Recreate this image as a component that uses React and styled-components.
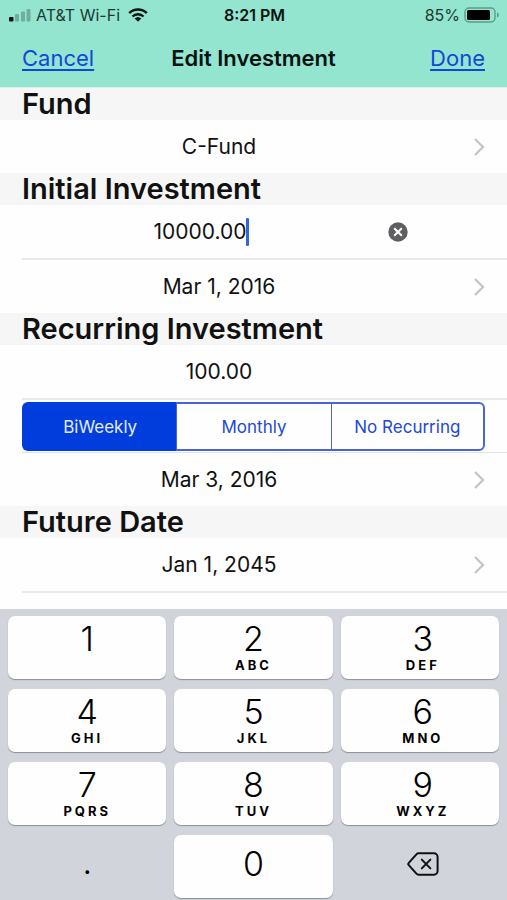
import React, { useState } from "react";
import styled, { createGlobalStyle } from "styled-components";

const GlobalStyle = createGlobalStyle`
  * {
    box-sizing: border-box;
  }
  body {
    margin: 0;
    background-color: #fefefe;
    color: #111;
    font-family: Inter, "Liberation Sans", sans-serif;
    font-size: 21px;
  }
  button, input {
    margin: 0;
    padding: 0;
    border: 0;
    background: none;
    color: inherit;
    font: inherit;
  }
  button {
    cursor: pointer;
  }
`;

const Screen = styled.div`
  display: flex;
  flex-direction: column;
  min-height: 100vh;
`;
const TopBar = styled.header`
  background-color: #93e5cf;
  border-bottom: 1px solid #d6f3eb;
`;
const StatusBar = styled.div`
  display: grid;
  grid-template-columns: 1fr auto 1fr;
  align-items: center;
  height: 30px;
  padding: 0 7px 0 9px;
  font-size: 16px;
  color: #1d3a33;
`;
const StatusGroup = styled.div`
  display: flex;
  align-items: center;
  gap: ${props => props.$gap}px;
  justify-content: ${props => (props.$end ? "flex-end" : "flex-start")};
`;
const Clock = styled.div`
  font-weight: 600;
  color: #06120f;
`;
const NavBar = styled.nav`
  display: grid;
  grid-template-columns: 1fr auto 1fr;
  align-items: center;
  height: 57px;
  padding: 0 22px 2px;
  h1 {
    margin: 0;
    font-size: 22px;
    font-weight: 600;
    color: #06120f;
  }
`;
const NavButton = styled.button`
  justify-self: ${props => (props.$end ? "end" : "start")};
  font-size: 22px;
  color: #1447d8;
  text-decoration: underline;
  text-decoration-thickness: 2px;
  text-underline-offset: 3px;
`;

const Form = styled.main`
  flex: 1;
`;
const SectionTitle = styled.h2`
  height: 32px;
  margin: 0;
  padding: 0 22px;
  background-color: #f6f6f6;
  font-size: 29px;
  font-weight: 600;
  line-height: 32px;
`;
const Row = styled.div`
  display: flex;
  align-items: center;
  margin-left: 22px;
  padding-right: 22px;
  height: ${props => (props.$divided ? 55 : 53)}px;
  border-bottom: ${props => (props.$divided ? "2px solid #e9e9ea" : "none")};
`;
const PickerButton = styled.button`
  display: flex;
  align-items: center;
  flex: 1;
  height: 100%;
`;
const Value = styled.span`
  flex: 1;
  text-align: center;
`;
const Accessory = styled.span`
  display: flex;
  justify-content: flex-end;
  width: 69px;
`;
const Field = styled.div`
  display: flex;
  align-items: center;
  justify-content: center;
  flex: 1;
  min-width: 0;
`;
const AmountInput = styled.input`
  field-sizing: content;
  height: 32px;
  text-align: center;
  outline: none;
  caret-color: transparent;
`;
const Caret = styled.span`
  width: 3px;
  height: 28px;
  margin-left: -1px;
  border-radius: 1px;
  background-color: #3565dc;
`;
const ClearButton = styled.button`
  display: flex;
  align-items: center;
  justify-content: center;
  width: 36px;
  height: 36px;
`;

const SegmentRow = styled.div`
  height: 53px;
  margin-left: 22px;
  padding: 2px 22px 1px 0;
  border-bottom: 1px solid #e2e2e5;
`;
const Segments = styled.fieldset`
  display: grid;
  grid-template-columns: repeat(3, 1fr);
  height: 49px;
  margin: 0;
  padding: 0;
  min-width: 0;
  border: 0;
`;
const Segment = styled.label`
  display: flex;
  align-items: center;
  justify-content: center;
  border: 2px solid #4a63dc;
  border-left-width: 1px;
  border-right-width: 0;
  font-size: 17px;
  color: #2348d4;
  cursor: pointer;
  &:first-of-type {
    border-left-width: 2px;
    border-radius: 6px 0 0 6px;
  }
  &:last-of-type {
    border-right-width: 2px;
    border-radius: 0 6px 6px 0;
  }
  &:has(input:checked) {
    border-color: #003ddc;
    background-color: #003ddc;
    color: #e4ebff;
  }
  input {
    appearance: none;
    width: 0;
    height: 0;
  }
`;

const Keypad = styled.section`
  display: grid;
  grid-template-columns: repeat(3, 1fr);
  grid-auto-rows: 63px;
  gap: 10px 8px;
  padding: 7px 8px 2px;
  background-color: #d1d4db;
`;
const Key = styled.button`
  display: flex;
  flex-direction: column;
  align-items: center;
  justify-content: ${props => (props.$top ? "flex-start" : "center")};
  padding: ${props => (props.$top ? "5px 0 0" : "0 0 5px")};
  border-radius: 7px;
  background-color: ${props => (props.$plain ? "transparent" : "#fefefe")};
  box-shadow: ${props => (props.$plain ? "none" : "0 1px 1px #8b8e94")};
  color: #000;
  &:nth-child(3n) {
    padding-left: 6px;
  }
`;
const Digit = styled.span`
  font-size: 34px;
  font-weight: 300;
  line-height: 36px;
`;
const Point = styled.span`
  font-size: 28px;
  line-height: 28px;
`;
const Letters = styled.span`
  font-size: 13px;
  font-weight: 700;
  line-height: 16px;
  letter-spacing: 3px;
`;

const KEYS = [
  { digit: "1", letters: "" },
  { digit: "2", letters: "ABC" },
  { digit: "3", letters: "DEF" },
  { digit: "4", letters: "GHI" },
  { digit: "5", letters: "JKL" },
  { digit: "6", letters: "MNO" },
  { digit: "7", letters: "PQRS" },
  { digit: "8", letters: "TUV" },
  { digit: "9", letters: "WXYZ" }
];
const FREQUENCIES = ["BiWeekly", "Monthly", "No Recurring"];

const SignalIcon = () => (
  <svg width="22" height="14" viewBox="0 0 22 14" aria-hidden="true">
    <rect x="0" y="9" width="4.5" height="4.5" rx="1" fill="#06120f" />
    <rect x="6" y="6" width="4" height="7.5" rx="1" fill="#6fae9d" />
    <rect x="12" y="3.5" width="4" height="10" rx="1" fill="#6fae9d" />
    <rect x="17.5" y="1" width="4" height="12.5" rx="1" fill="#6fae9d" />
  </svg>
);

const WifiIcon = () => (
  <svg width="20" height="14" viewBox="0 0 20 14" aria-hidden="true">
    <g fill="none" stroke="#06120f" strokeWidth="2.4">
      <path d="M1.2 5.1a12.6 12.6 0 0 1 17.6 0" />
      <path d="M4.5 8.5a8 8 0 0 1 11 0" />
    </g>
    <path d="M6.7 10.6a4.8 4.8 0 0 1 6.6 0L10 13.8z" fill="#06120f" />
  </svg>
);

const BatteryIcon = () => (
  <svg width="36" height="16" viewBox="0 0 36 16" aria-hidden="true">
    <rect x="1" y="1" width="30" height="14" rx="4" fill="none" stroke="#5f9a8b" strokeWidth="1.4" />
    <rect x="3" y="3" width="23" height="10" rx="1.5" fill="#000" />
    <path d="M33 5.5c2.4.8 2.4 4.2 0 5z" fill="#5f9a8b" />
  </svg>
);

const ChevronIcon = () => (
  <svg width="12" height="18" viewBox="0 0 12 18" aria-hidden="true">
    <path d="M2 1l8 8-8 8" fill="none" stroke="#c4c4c7" strokeWidth="2.2" />
  </svg>
);

const ClearIcon = () => (
  <svg width="20" height="20" viewBox="0 0 20 20" aria-hidden="true">
    <circle cx="10" cy="10" r="9.7" fill="#5f5f61" />
    <path d="M6.2 6.2l7.6 7.6M13.8 6.2l-7.6 7.6" stroke="#fff" strokeWidth="2.1" />
  </svg>
);

const DeleteIcon = () => (
  <svg width="32" height="24" viewBox="0 0 32 24" aria-hidden="true">
    <g fill="none" stroke="#111" strokeWidth="2" strokeLinejoin="round" strokeLinecap="round">
      <path d="M11.6 1.3H27a3.6 3.6 0 0 1 3.6 3.6v14.2a3.6 3.6 0 0 1-3.6 3.6H11.6a3 3 0 0 1-2.2-1L1.8 13.2a1.8 1.8 0 0 1 0-2.4l7.6-8.5a3 3 0 0 1 2.2-1z" />
      <path d="M14.8 7.6l8.6 8.8M23.4 7.6l-8.6 8.8" />
    </g>
  </svg>
);

const PickerRow = ({ label, value, divided }) => (
  <Row $divided={divided}>
    <PickerButton type="button" aria-label={`${label}: ${value}`}>
      <Value>{value}</Value>
      <Accessory>
        <ChevronIcon />
      </Accessory>
    </PickerButton>
  </Row>
);

const App = () => {
  const [active, setActive] = useState("initial");
  const [amounts, setAmounts] = useState({
    initial: "10000.00",
    recurring: "100.00"
  });
  const [frequency, setFrequency] = useState("BiWeekly");

  const setAmount = (name, value) => setAmounts({ ...amounts, [name]: value });
  const press = key => setAmount(active, amounts[active] + key);
  const removeLast = () => setAmount(active, amounts[active].slice(0, -1));

  const amountRow = (name, label) => (
    <Row $divided>
      <Field>
        <AmountInput
          aria-label={label}
          inputMode="decimal"
          value={amounts[name]}
          onFocus={() => setActive(name)}
          onChange={e => setAmount(name, e.target.value)}
        />
        {active === name && <Caret />}
      </Field>
      {active === name && (
        <ClearButton
          type="button"
          aria-label="Clear text"
          onClick={() => setAmount(name, "")}
        >
          <ClearIcon />
        </ClearButton>
      )}
      <Accessory />
    </Row>
  );

  return (
    <Screen>
      <GlobalStyle />
      <TopBar>
        <StatusBar>
          <StatusGroup $gap={5}>
            <SignalIcon />
            <StatusGroup $gap={8}>
              <span>AT&amp;T Wi-Fi</span>
              <WifiIcon />
            </StatusGroup>
          </StatusGroup>
          <Clock>8:21 PM</Clock>
          <StatusGroup $gap={4} $end>
            <span>85%</span>
            <BatteryIcon />
          </StatusGroup>
        </StatusBar>
        <NavBar>
          <NavButton type="button">Cancel</NavButton>
          <h1>Edit Investment</h1>
          <NavButton type="button" $end>
            Done
          </NavButton>
        </NavBar>
      </TopBar>
      <Form>
        <SectionTitle>Fund</SectionTitle>
        <PickerRow label="Fund" value="C-Fund" />
        <SectionTitle>Initial Investment</SectionTitle>
        {amountRow("initial", "Initial investment amount")}
        <PickerRow label="Initial investment date" value="Mar 1, 2016" />
        <SectionTitle>Recurring Investment</SectionTitle>
        {amountRow("recurring", "Recurring investment amount")}
        <SegmentRow>
          <Segments aria-label="Frequency">
            {FREQUENCIES.map(item => (
              <Segment key={item}>
                <input
                  type="radio"
                  name="frequency"
                  checked={frequency === item}
                  onChange={() => setFrequency(item)}
                />
                {item}
              </Segment>
            ))}
          </Segments>
        </SegmentRow>
        <PickerRow label="Recurring investment date" value="Mar 3, 2016" />
        <SectionTitle>Future Date</SectionTitle>
        <PickerRow label="Future date" value="Jan 1, 2045" divided />
      </Form>
      <Keypad aria-label="Keypad">
        {KEYS.map(({ digit, letters }) => (
          <Key key={digit} type="button" $top onClick={() => press(digit)}>
            <Digit>{digit}</Digit>
            {letters && <Letters>{letters}</Letters>}
          </Key>
        ))}
        <Key type="button" $plain onClick={() => press(".")}>
          <Point>.</Point>
        </Key>
        <Key type="button" onClick={() => press("0")}>
          <Digit>0</Digit>
        </Key>
        <Key type="button" $plain aria-label="Delete" onClick={removeLast}>
          <DeleteIcon />
        </Key>
      </Keypad>
    </Screen>
  );
};

export default App;
